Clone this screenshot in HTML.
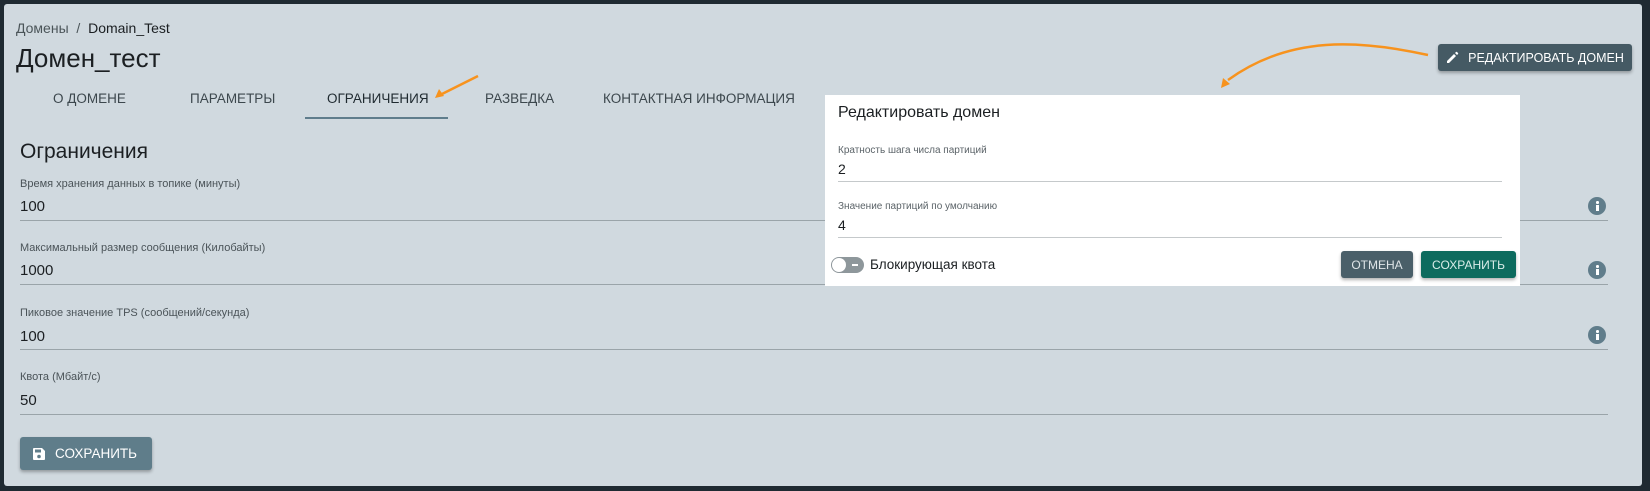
<!DOCTYPE html>
<html><head><meta charset="utf-8"><style>
*{margin:0;padding:0;box-sizing:border-box}
body{width:1650px;height:491px;background:#1f2a32;font-family:"Liberation Sans",sans-serif;position:relative;overflow:hidden;color:#1b1f22}
.panel{position:absolute;left:4px;top:4px;width:1638px;height:482px;background:#d0d9df;border-radius:3px}
.a{position:absolute;white-space:nowrap}
.tab{font-size:13.5px;color:#3c474d;top:91px}
.lbl{font-size:11px;color:#4a5358;left:20px}
.val{font-size:15px;color:#1b1f22;left:20px}
.line{position:absolute;left:20px;width:1588px;height:1px;background:#9aa4a9}
.info{position:absolute;width:18px;height:18px;border-radius:50%;background:#607d8b;left:1588px}
.info:before{content:"";position:absolute;left:8px;top:4px;width:2.5px;height:2.5px;background:#fff;border-radius:50%}
.info:after{content:"";position:absolute;left:8px;top:8px;width:2.5px;height:6px;background:#fff}
.btn{position:absolute;border-radius:3px;color:#fff;font-size:13.5px;display:flex;align-items:center;justify-content:center;box-shadow:0 2px 3px rgba(0,0,0,.3)}
</style></head><body>
<div class="panel"></div>
<div class="a" style="left:16px;top:20px;font-size:14px;color:#4b5559">Домены &nbsp;/&nbsp; <span style="color:#1b1f22">Domain_Test</span></div>
<div class="a" style="left:16px;top:43px;font-size:26px;color:#1b1f22">Домен_тест</div>
<div class="a tab" style="left:53px">О ДОМЕНЕ</div>
<div class="a tab" style="left:190px">ПАРАМЕТРЫ</div>
<div class="a tab" style="left:327px;color:#1f2a30">ОГРАНИЧЕНИЯ</div>
<div class="a tab" style="left:485px">РАЗВЕДКА</div>
<div class="a tab" style="left:603px">КОНТАКТНАЯ ИНФОРМАЦИЯ</div>
<div style="position:absolute;left:305px;top:117px;width:143px;height:2px;background:#5f7d8c"></div>
<div class="a" style="left:20px;top:140px;font-size:21px;color:#1b1f22">Ограничения</div>

<div class="a lbl" style="top:178px">Время хранения данных в топике (минуты)</div>
<div class="a val" style="top:198px">100</div><div class="line" style="top:220px"></div>
<div class="a lbl" style="top:242px">Максимальный размер сообщения (Килобайты)</div>
<div class="a val" style="top:262px">1000</div><div class="line" style="top:284px"></div>
<div class="a lbl" style="top:307px">Пиковое значение TPS (сообщений/секунда)</div>
<div class="a val" style="top:328px">100</div><div class="line" style="top:349px"></div>
<div class="a lbl" style="top:371px">Квота (Мбайт/с)</div>
<div class="a val" style="top:392px">50</div><div class="line" style="top:414px"></div>
<div class="info" style="top:197px"></div><div class="info" style="top:261px"></div><div class="info" style="top:326px"></div>

<div class="btn" style="left:20px;top:437px;width:132px;height:33px;background:#5f7d8a;justify-content:flex-start;padding-left:12px">
<svg width="14" height="14" viewBox="0 0 14 14" style="margin-right:9px"><path d="M1 2a1 1 0 0 1 1-1h8l3 3v8a1 1 0 0 1-1 1H2a1 1 0 0 1-1-1z" fill="#fff"/><rect x="3" y="2.5" width="6" height="3" fill="#5f7d8a"/><circle cx="7" cy="9.5" r="1.8" fill="#5f7d8a"/></svg>СОХРАНИТЬ</div>

<div class="btn" style="left:1438px;top:44px;width:194px;height:27px;background:#455a64;font-size:12.5px">
<svg width="13" height="13" viewBox="0 0 13 13" style="margin-right:9px"><path d="M1 10v2h2l7-7-2-2zM9 2l2 2 1-1a.7.7 0 0 0 0-1l-1-1a.7.7 0 0 0-1 0z" fill="#fff"/></svg>РЕДАКТИРОВАТЬ ДОМЕН</div>

<svg style="position:absolute;left:0;top:0" width="1650" height="491">
<path d="M478 76 L440 95" stroke="#f7931e" stroke-width="2.5" fill="none"/>
<path d="M435 98 l4 -9 l5 7z" fill="#f7931e"/>
<path d="M1428 55 C1360 40 1290 35 1228 80" stroke="#f7931e" stroke-width="2.5" fill="none"/>
<path d="M1221 88 l2 -10 l7 6z" fill="#f7931e"/>
</svg>

<div style="position:absolute;left:825px;top:95px;width:695px;height:191px;background:#fff"></div>
<div class="a" style="left:838px;top:104px;font-size:16px;color:#1b1f22">Редактировать домен</div>
<div class="a" style="left:838px;top:145px;font-size:10px;color:#5b6368">Кратность шага числа партиций</div>
<div class="a" style="left:838px;top:161px;font-size:14px">2</div>
<div style="position:absolute;left:838px;top:181px;width:664px;height:1px;background:#c5c9cb"></div>
<div class="a" style="left:838px;top:201px;font-size:10px;color:#5b6368">Значение партиций по умолчанию</div>
<div class="a" style="left:838px;top:217px;font-size:14px">4</div>
<div style="position:absolute;left:838px;top:237px;width:664px;height:1px;background:#c5c9cb"></div>
<div style="position:absolute;left:831px;top:257px;width:33px;height:16px;border-radius:8px;background:#8e979b"></div>
<div style="position:absolute;left:832px;top:258px;width:14px;height:14px;border-radius:50%;background:#fff"></div>
<div style="position:absolute;left:852px;top:264px;width:6px;height:2px;background:#fff"></div>
<div class="a" style="left:870px;top:257px;font-size:13.5px;color:#1b1f22">Блокирующая квота</div>
<div class="btn" style="left:1341px;top:251px;width:72px;height:27px;background:#4a5f69;font-size:12px;color:#dfe5e8">ОТМЕНА</div>
<div class="btn" style="left:1421px;top:251px;width:95px;height:27px;background:#0d6b5e;font-size:12px;color:#d9ece8">СОХРАНИТЬ</div>
</body></html>
